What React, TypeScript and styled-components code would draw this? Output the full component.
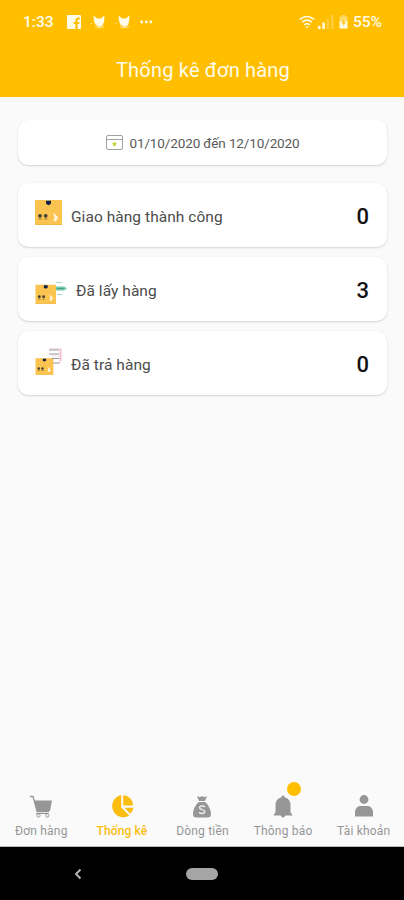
import React from "react";
import styled, { createGlobalStyle } from "styled-components";

const GlobalStyle = createGlobalStyle`
  * { box-sizing: border-box; }
  body { margin: 0; background: #fafafa; font-family: Roboto, "Liberation Sans", sans-serif; }
`;

const Screen = styled.div`
  width: 404px;
  height: 900px;
  display: flex;
  flex-direction: column;
  background: #fafafa;
  overflow: hidden;
`;

const Header = styled.header`
  height: 97px;
  flex: none;
  background: #ffbf00;
  color: #fffbe9;
`;

const StatusBar = styled.div`
  height: 43px;
  padding: 0 22px 0 23px;
  display: flex;
  align-items: center;
  justify-content: space-between;
`;

const StatusGroup = styled.div<{ $gap: number }>`
  display: flex;
  align-items: center;
  gap: ${(p) => p.$gap}px;
`;

const StatusText = styled.span`
  font-size: 15.5px;
  line-height: 18px;
  font-weight: 500;
`;

const Icon = styled.svg`
  display: block;
  flex: none;
`;

const Title = styled.h1`
  margin: 0;
  height: 54px;
  line-height: 54px;
  padding-left: 2px;
  text-align: center;
  font-size: 20px;
  font-weight: 400;
  letter-spacing: 0.2px;
`;

const Content = styled.main`
  flex: 1;
  padding: 23px 17px 0 18px;
`;

const Card = styled.section`
  background: #fff;
  border-radius: 10px;
  box-shadow: 0 1px 2px rgba(0, 0, 0, 0.15), 0 0 1px rgba(0, 0, 0, 0.06);
`;

const DateCard = styled(Card)`
  height: 45px;
  display: flex;
  align-items: center;
  justify-content: center;
  gap: 6px;
  padding-left: 1px;
  margin-bottom: 18px;
  color: #5a5a5a;
  font-size: 13.5px;
  letter-spacing: -0.12px;
`;

const StatCard = styled(Card)`
  height: 64px;
  display: flex;
  align-items: center;
  padding: 2px 18px 0 17px;
  margin-bottom: 10px;
`;

const StatLabel = styled.span`
  flex: 1;
  margin: 1px 0 0 9px;
  font-size: 15.5px;
  letter-spacing: 0.05px;
  color: #4c4c4c;
`;

const StatValue = styled.strong`
  font-size: 22px;
  font-weight: 500;
  color: #111;
`;

const TabBar = styled.nav`
  height: 65px;
  flex: none;
  display: grid;
  grid-template-columns: repeat(5, 1fr);
  padding-left: 1px;
  border-bottom: 1px solid #bbb;
`;

const Tab = styled.div<{ $active?: boolean }>`
  display: flex;
  flex-direction: column;
  align-items: center;
  padding-top: 12px;
  color: ${(p) => (p.$active ? "#fabd10" : "#969696")};
`;

const TabIcon = styled.div`
  position: relative;
  height: 26px;
`;

const TabLabel = styled.span<{ $active?: boolean }>`
  font-size: 12px;
  line-height: 18px;
  margin-top: 2px;
  white-space: nowrap;
  letter-spacing: ${(p) => (p.$active ? 0.1 : 0.2)}px;
  font-weight: ${(p) => (p.$active ? 500 : 400)};
`;

const Badge = styled.span`
  position: absolute;
  top: -12px;
  right: -8px;
  width: 14px;
  height: 14px;
  border-radius: 50%;
  background: #ffbf00;
`;

const SystemBar = styled.footer`
  height: 53px;
  flex: none;
  background: #000;
  display: grid;
  grid-template-columns: 156px 92px 1fr;
  align-items: center;
  justify-items: center;
`;

const HomePill = styled.div`
  width: 32px;
  height: 12px;
  border-radius: 6px;
  background: #a5a5a5;
`;

const Facebook = () => (
  <Icon width="14" height="14" viewBox="0 0 14 14">
    <path fill="currentColor" fillRule="evenodd" d="M1 0h12a1 1 0 0 1 1 1v12a1 1 0 0 1-1 1h-2.4V9h1.7l.3-2h-2V5.8c0-.8.3-1.2 1.2-1.2h1V2.7c-.5-.1-1-.1-1.600-.1-1.800 0-2.800 1.100-2.800 2.900V7H6.600v2h1.800v5H1a1 1 0 0 1-1-1V1a1 1 0 0 1 1-1Z" />
  </Icon>
);

const CatHead = () => (
  <Icon width="16" height="14" viewBox="0 0 16 14">
    <path fill="currentColor" d="M3.500.5 7 3.500h4L14.500.3 14 7l-1.200 3.200L9.500 12 5.500 9.700 4 6Z" />
    <path d="M5 11.500q4 2.300 9 .2" fill="none" stroke="currentColor" strokeOpacity=".55" strokeWidth="1.300" />
    <path d="M0 8.500h2.500" stroke="currentColor" strokeOpacity=".35" />
  </Icon>
);

const Dots = () => (
  <Icon width="13" height="4" viewBox="0 0 13 4">
    <circle cx="1.700" cy="2" r="1.400" fill="currentColor" />
    <circle cx="6.300" cy="2" r="1.400" fill="currentColor" />
    <circle cx="10.900" cy="2" r="1.400" fill="currentColor" />
  </Icon>
);

const Wifi = () => (
  <Icon width="16" height="14" viewBox="0 0 16 14" fill="none" stroke="currentColor" strokeWidth="1.500">
    <path d="M.8 4.300Q8-1.500 15.200 4.300M3 7.200Q8 3 13 7.200M5.200 9.900Q8 7.500 10.800 9.900" />
    <path d="m6.300 11.400 1.700 2 1.700-2Z" fill="currentColor" stroke="none" />
  </Icon>
);

const Signal = () => (
  <Icon width="16" height="14" viewBox="0 0 16 14" fill="currentColor">
    <path d="M0 11h2.500v3H0zM4.300 7.500h2.500V14H4.300z" />
    <path opacity=".25" d="M8.600 4h2.500v10H8.600zM13 0h2.500v14H13z" />
  </Icon>
);

const Battery = () => (
  <Icon width="9" height="14" viewBox="0 0 9 14">
    <path fill="currentColor" opacity=".45" d="M3 0h3v1.500h2.500V7H.5V1.500H3Z" />
    <path fill="currentColor" d="M.5 6.500h8v7h-8Z" />
    <path d="m5 4-2.500 4.500h2L4 11.500l2.600-4.500h-2Z" fill="#ffbf00" />
  </Icon>
);

const Calendar = () => (
  <Icon width="17" height="15" viewBox="0 0 17 15" fill="none" stroke="#a0a0a0">
    <rect x=".5" y=".5" width="16" height="14" rx="1.500" />
    <path d="M1 4.500h15" />
    <path d="m8.500 6.200.8 1.700 1.800.3-1.300 1.300.3 1.800-1.600-.9-1.600.9.3-1.800-1.300-1.300 1.800-.3Z" fill="#cad23c" stroke="none" />
  </Icon>
);

const BoxShape = () => (
  <>
    <path fill="#fbc450" d="M0 1h27v25H0Z" />
    <path fill="#f1b940" d="M0 25h27v1H0Z" />
    <path fill="#e6cb83" d="M11 1h5v1h-5z" />
    <path fill="#152047" d="M11 1.800h5v3L13.500 6.200 11 4.800Z" />
    <circle cx="5" cy="16.800" r="1.900" fill="#454138" />
    <circle cx="10.700" cy="16.800" r="1.900" fill="#454138" />
    <path fill="#98702c" d="M3.500 19.500h3v1h-3zM9.200 19.500h3v1h-3z" />
    <path fill="#fff6de" d="m18 13.500 5 4.500-1.500 3.700-3 .8 1-4.200Z" />
  </>
);

const BoxDone = () => (
  <Icon width="27" height="34" viewBox="0 0 27 34">
    <BoxShape />
  </Icon>
);

const BoxPicked = () => (
  <Icon width="32" height="32" viewBox="0 0 32 32">
    <g transform="translate(.5 10) scale(.76)">
      <BoxShape />
    </g>
    <path fill="#70caa5" d="M21 12.500h8l3 2-3 2h-8Z" />
    <path stroke="#a8dbc5" d="M21 8.500h6M22 20.500h5" />
    <path stroke="#4da185" d="M22 14.500h7" />
  </Icon>
);

const BoxReturned = () => (
  <Icon width="27" height="34" viewBox="0 0 27 34">
    <g transform="translate(.5 10.500) scale(.66)">
      <BoxShape />
    </g>
    <path d="M14 3h10M14 7h10M17 11.500h7M18 16h7" stroke="#949499" />
    <path d="M25.500 1.500v13" stroke="#f0c1ca" strokeWidth="2" />
    <path d="M15 1.500h9M16 9h8" stroke="#f3dce0" />
  </Icon>
);

const Cart = () => (
  <Icon width="24" height="26" viewBox="0 0 24 26">
    <path d="M1 2.500h3l4.200 15H20" fill="none" stroke="currentColor" strokeWidth="1.300" />
    <path d="M5 6.500h18l-2 10.500H7.500Z" fill="currentColor" />
    <path d="M7 19.500h12.500" stroke="currentColor" />
    <circle cx="9.500" cy="21.500" r="1.600" fill="#fafafa" stroke="currentColor" />
    <circle cx="18.300" cy="21.500" r="1.600" fill="#fafafa" stroke="currentColor" />
  </Icon>
);

const Pie = () => (
  <Icon width="24" height="26" viewBox="0 0 24 26" fill="currentColor">
    <path d="M11.300 1v12.500l8 8A11.200 11.200 0 1 1 11.300 1Z" />
    <path d="M13.200 1A10.500 10.500 0 0 1 23 11.600h-9.800ZM14.500 13.700h9q-.3 3.700-3.400 6Z" />
  </Icon>
);

const MoneyBag = () => (
  <Icon width="22" height="26" viewBox="0 0 22 26">
    <path fill="currentColor" d="m6 2 3 1.300L11 2l2.300 1.300L16 2l-2 5H8ZM7.800 8h6.400c3.500 3 5.800 8 5.800 12 0 2.400-1 3.500-3.500 3.500h-11C3 23.500 2 22.400 2 20 2 16 4.300 11 7.800 8Z" />
    <path d="M14 12.800c-2-1.300-5.500-1.200-5.500 1s5.300 1.500 5.300 3.800-3.800 2.300-5.800.8" fill="none" stroke="#eee" strokeWidth="1.500" />
  </Icon>
);

const Bell = () => (
  <Icon width="20" height="26" viewBox="0 0 20 26" fill="currentColor">
    <path d="M10 1 12 3.500q5.500 1.500 5.500 8v7l1.700 2v1H.8v-1l1.700-2v-7Q2.500 5 8 3.500ZM7.500 21.500h5L10 24Z" />
  </Icon>
);

const Person = () => (
  <Icon width="20" height="26" viewBox="0 0 20 26" fill="currentColor">
    <circle cx="10" cy="5.500" r="4.400" />
    <path d="M1 22.500v-4c0-4 2.500-6.500 6-6.500h6c3.500 0 6 2.500 6 6.500v4Z" />
  </Icon>
);

const stats = [
  { label: "Giao hàng thành công", value: 0, icon: <BoxDone /> },
  { label: "Đã lấy hàng", value: 3, icon: <BoxPicked /> },
  { label: "Đã trả hàng", value: 0, icon: <BoxReturned /> },
];

const tabs = [
  { label: "Đơn hàng", icon: <Cart /> },
  { label: "Thống kê", icon: <Pie />, active: true },
  { label: "Dòng tiền", icon: <MoneyBag /> },
  { label: "Thông báo", icon: <Bell />, badge: true },
  { label: "Tài khoản", icon: <Person /> },
];

export default function App() {
  return (
    <Screen>
      <GlobalStyle />
      <Header>
        <StatusBar>
          <StatusGroup $gap={13}>
            <StatusText>1:33</StatusText>
            <StatusGroup $gap={9}>
              <Facebook />
              <CatHead />
              <CatHead />
              <Dots />
            </StatusGroup>
          </StatusGroup>
          <StatusGroup $gap={5}>
            <StatusGroup $gap={3}>
              <Wifi />
              <Signal />
            </StatusGroup>
            <Battery />
            <StatusText>55%</StatusText>
          </StatusGroup>
        </StatusBar>
        <Title>Thống kê đơn hàng</Title>
      </Header>
      <Content>
        <DateCard>
          <Calendar />
          <span>01/10/2020 đến 12/10/2020</span>
        </DateCard>
        {stats.map((s) => (
          <StatCard key={s.label}>
            {s.icon}
            <StatLabel>{s.label}</StatLabel>
            <StatValue>{s.value}</StatValue>
          </StatCard>
        ))}
      </Content>
      <TabBar>
        {tabs.map((t) => (
          <Tab key={t.label} $active={t.active}>
            <TabIcon>
              {t.icon}
              {t.badge && <Badge />}
            </TabIcon>
            <TabLabel $active={t.active}>{t.label}</TabLabel>
          </Tab>
        ))}
      </TabBar>
      <SystemBar>
        <Icon width="8" height="12" viewBox="0 0 8 12">
          <path d="M6.500 1.500 2 6l4.500 4.500" fill="none" stroke="#bbb" strokeWidth="1.800" />
        </Icon>
        <HomePill />
      </SystemBar>
    </Screen>
  );
}
